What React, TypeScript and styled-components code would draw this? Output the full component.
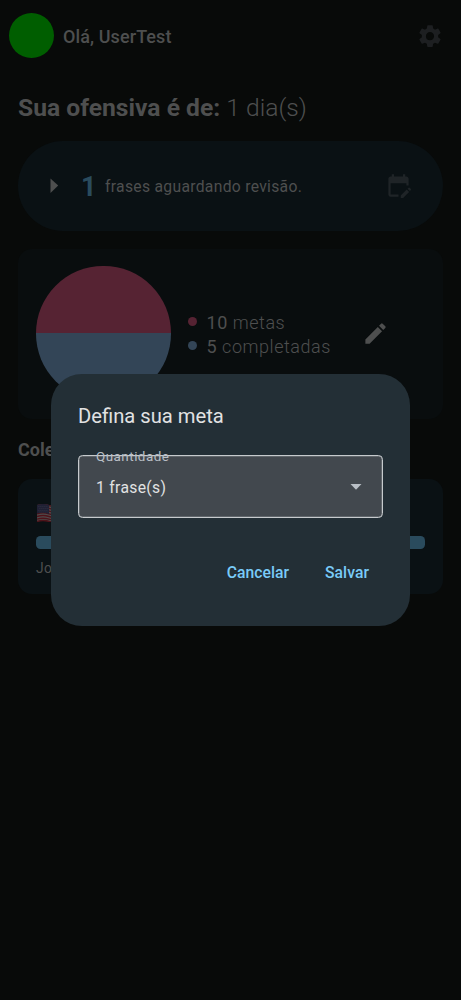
import React from "react";
import styled, { createGlobalStyle } from "styled-components";

const GlobalStyle = createGlobalStyle`
  * { box-sizing: border-box; }
  body { margin: 0; background: #080a09; font-family: Roboto, sans-serif; }
`;

const Screen = styled.div`
  position: relative;
  width: 461px;
  height: 1000px;
  overflow: hidden;
  background: #080a09;
  color: #4e4f4f;
`;

const Header = styled.header`
  display: flex;
  align-items: center;
  height: 72px;
  padding: 0 19px 0 9px;
`;

const Avatar = styled.div`
  width: 45px;
  height: 45px;
  margin-top: -1px;
  border-radius: 50%;
  background: #005e00;
`;

const Greeting = styled.div`
  flex: 1;
  margin-left: 9px;
  font-size: 18px;
  font-weight: 500;
  letter-spacing: 0.1px;
`;

const Main = styled.main`
  padding: 18px 18px 0;
`;

const Streak = styled.h1`
  margin: 0 0 15.5px;
  font-size: 24.65px;
  line-height: 35px;
  font-weight: 700;
  span { font-weight: 300; }
`;

const ReviewCard = styled.section`
  display: flex;
  align-items: center;
  height: 90px;
  padding: 0 31px 0 30px;
  border-radius: 45px;
  background: #0a1114;
`;

const ReviewCount = styled.strong`
  margin-left: 17px;
  padding-top: 2px;
  font-size: 27px;
  color: #2a4b5d;
`;

const ReviewText = styled.span`
  flex: 1;
  margin-left: 8.5px;
  padding-top: 1px;
  font-size: 15.7px;
  letter-spacing: 0.3px;
`;

const GoalCard = styled.section`
  display: flex;
  align-items: center;
  height: 170px;
  margin-top: 18px;
  padding: 0 18px;
  border-radius: 14px;
  background: #090d0e;
`;

const Pie = styled.div`
  width: 134.5px;
  height: 134.5px;
  border-radius: 50%;
  background: linear-gradient(#562333 50%, #334557 50%);
`;

const Legend = styled.ul`
  flex: 1;
  margin: 0 0 0 17px;
  padding: 1px 0 0;
  list-style: none;
`;

const LegendItem = styled.li<{ $dot: string }>`
  display: flex;
  align-items: center;
  height: 24px;
  font-size: 18px;
  font-weight: 300;
  letter-spacing: 0.54px;
  white-space: pre;
  &::before {
    content: "";
    width: 9px;
    height: 9px;
    margin: -1px 10px 0 0;
    border-radius: 50%;
    background: ${(p) => p.$dot};
  }
`;

const EditIcon = styled.svg`
  margin-right: 36px;
`;

const SectionTitle = styled.h2`
  margin: 18px 0 17px;
  font-size: 18px;
  line-height: 25px;
  font-weight: 700;
`;

const CollectionCard = styled.section`
  height: 115px;
  padding: 25px 18px;
  border-radius: 14px;
  background: #0a1114;
`;

const Flag = styled.svg`
  display: block;
  margin-left: 1px;
`;

const Progress = styled.div`
  height: 13.5px;
  margin-top: 14px;
  border-radius: 4.5px;
  background: #2a4b5d;
`;

const CollectionName = styled.div`
  margin-top: 10px;
  font-size: 13.8px;
  line-height: 18px;
  font-weight: 400;
  letter-spacing: 0.45px;
`;

const Overlay = styled.div`
  position: absolute;
  inset: 0;
  display: flex;
  align-items: center;
  justify-content: center;
`;

const Dialog = styled.div`
  width: 359px;
  height: 252px;
  padding: 27px;
  border-radius: 31px;
  background: #232f36;
`;

const DialogTitle = styled.h2`
  margin: 0;
  padding-top: 1px;
  font-size: 20.2px;
  line-height: 29px;
  font-weight: 400;
  color: #e1e2e3;
`;

const Select = styled.div`
  position: relative;
  display: flex;
  align-items: center;
  justify-content: space-between;
  height: 63px;
  margin-top: 24px;
  padding: 1px 20px 0 17px;
  border: 1px solid #c6cacd;
  box-shadow: inset 0 0 0 0.5px #7f8488;
  border-radius: 4.5px;
  background: #42484e;
  color: #e1e2e3;
  font-size: 15.7px;
  letter-spacing: 0.32px;
`;

const SelectLabel = styled.span`
  position: absolute;
  left: 17px;
  top: -9px;
  font-size: 13.45px;
  line-height: 19px;
  letter-spacing: 0.47px;
  color: #b9bfc6;
`;

const Actions = styled.div`
  display: flex;
  justify-content: flex-end;
  gap: 36px;
  margin-top: 43px;
  padding-right: 14px;
`;

const TextButton = styled.button`
  padding: 0;
  border: 0;
  background: none;
  font: 500 15.7px/24px Roboto, sans-serif;
  letter-spacing: 0.05px;
  color: #79cbf8;
`;

export default function App() {
  return (
    <Screen>
      <GlobalStyle />
      <Header>
        <Avatar />
        <Greeting>Olá, UserTest</Greeting>
        <svg width="24" height="25" viewBox="2 1.3 20 22" preserveAspectRatio="xMidYMid meet" fill="#1d1f21">
          <path d="M19.14 12.94c.04-.3.06-.61.06-.94 0-.32-.02-.64-.07-.94l2.03-1.58c.18-.14.23-.41.12-.61l-1.92-3.32c-.12-.22-.37-.29-.59-.22l-2.39.96c-.5-.38-1.03-.7-1.62-.94l-.36-2.54c-.04-.24-.24-.41-.48-.41h-3.84c-.24 0-.43.17-.47.41l-.36 2.54c-.59.24-1.13.57-1.62.94l-2.39-.96c-.22-.08-.47 0-.59.22L2.74 8.87c-.12.21-.08.47.12.61l2.03 1.58c-.05.3-.09.63-.09.94s.02.64.07.94l-2.03 1.58c-.18.14-.23.41-.12.61l1.92 3.32c.12.22.37.29.59.22l2.39-.96c.5.38 1.03.7 1.62.94l.36 2.54c.05.24.24.41.48.41h3.84c.24 0 .44-.17.47-.41l.36-2.54c.59-.24 1.13-.56 1.62-.94l2.39.96c.22.08.47 0 .59-.22l1.92-3.32c.12-.22.07-.47-.12-.61l-2.01-1.58zM12 15.6A3.61 3.61 0 0 1 8.4 12c0-1.98 1.62-3.6 3.6-3.6s3.6 1.62 3.6 3.6-1.62 3.6-3.6 3.6z" />
        </svg>
      </Header>
      <Main>
        <Streak>Sua ofensiva é de: <span>1 dia(s)</span></Streak>
        <ReviewCard>
          <svg width="16" height="16" viewBox="0 0 16 16" fill="#4e4f4f"><path d="M2.5 .6v14.3L10.2 7.6z" /></svg>
          <ReviewCount>1</ReviewCount>
          <ReviewText>frases aguardando revisão.</ReviewText>
          <svg width="27" height="27" viewBox="0 0 24 24" fill="#1f2427">
            <path d="M12 22H5a2 2 0 0 1-1.99-2L3 6c0-1.1.89-2 2-2h1V2h2v2h8V2h2v2h1c1.1 0 2 .9 2 2v6h-2v-2H5v10h7v2zm10.13-5.01.71-.71a.996.996 0 0 0 0-1.41l-.71-.71a.996.996 0 0 0-1.41 0l-.71.71 2.12 2.12zm-.71.71-5.3 5.3H14v-2.12l5.3-5.3 2.12 2.12z" />
          </svg>
        </ReviewCard>
        <GoalCard>
          <Pie />
          <Legend>
            <LegendItem $dot="#562333"><b>10</b> metas</LegendItem>
            <LegendItem $dot="#334557"><b>5</b> completadas</LegendItem>
          </Legend>
          <EditIcon width="27" height="27" viewBox="0 0 24 24" fill="#4e4f4f">
            <path d="M3 17.25V21h3.75L17.81 9.94l-3.75-3.75L3 17.25zM20.71 7.04a.996.996 0 0 0 0-1.41l-2.34-2.34a.996.996 0 0 0-1.41 0l-1.83 1.83 3.75 3.75 1.83-1.83z" />
          </EditIcon>
        </GoalCard>
        <SectionTitle>Coleções</SectionTitle>
        <CollectionCard>
          <Flag width="24" height="18" viewBox="0 0 24 18">
            <path d="M0 1Q6-1 12 1t12 0v16q-6 2-12 0t-12 1z" fill="#4e4b4c" />
            <path d="M0 1.7Q6-.3 12 1.7t12 0M0 4.4q6-2 12 0t12 0M0 7.1q6-2 12 0t12 0M0 9.8q6-2 12 0t12 0M0 12.5q6-2 12 0t12 0M0 15.2q6-2 12 0t12 0M0 17.5q6-2 12 0t12 0" fill="none" stroke="#4e1219" strokeWidth="1.4" />
            <path d="M0 1Q6-1 12 1v9q-6-2-12-.5z" fill="#1f2034" />
            <path d="M1.5 2.5h9M2.5 4.5h9M1.5 6.5h9M2.5 8h9" fill="none" stroke="#3c3c49" strokeWidth=".7" strokeDasharray=".8 1.2" />
          </Flag>
          <Progress />
          <CollectionName>Jogos</CollectionName>
        </CollectionCard>
      </Main>
      <Overlay>
        <Dialog role="dialog">
          <DialogTitle>Defina sua meta</DialogTitle>
          <Select>
            <SelectLabel>Quantidade</SelectLabel>
            1 frase(s)
            <svg width="12" height="6" viewBox="0 0 12 6" fill="#b9bfc6"><path d="M.5 0h11L6 5.8z" /></svg>
          </Select>
          <Actions>
            <TextButton>Cancelar</TextButton>
            <TextButton>Salvar</TextButton>
          </Actions>
        </Dialog>
      </Overlay>
    </Screen>
  );
}
